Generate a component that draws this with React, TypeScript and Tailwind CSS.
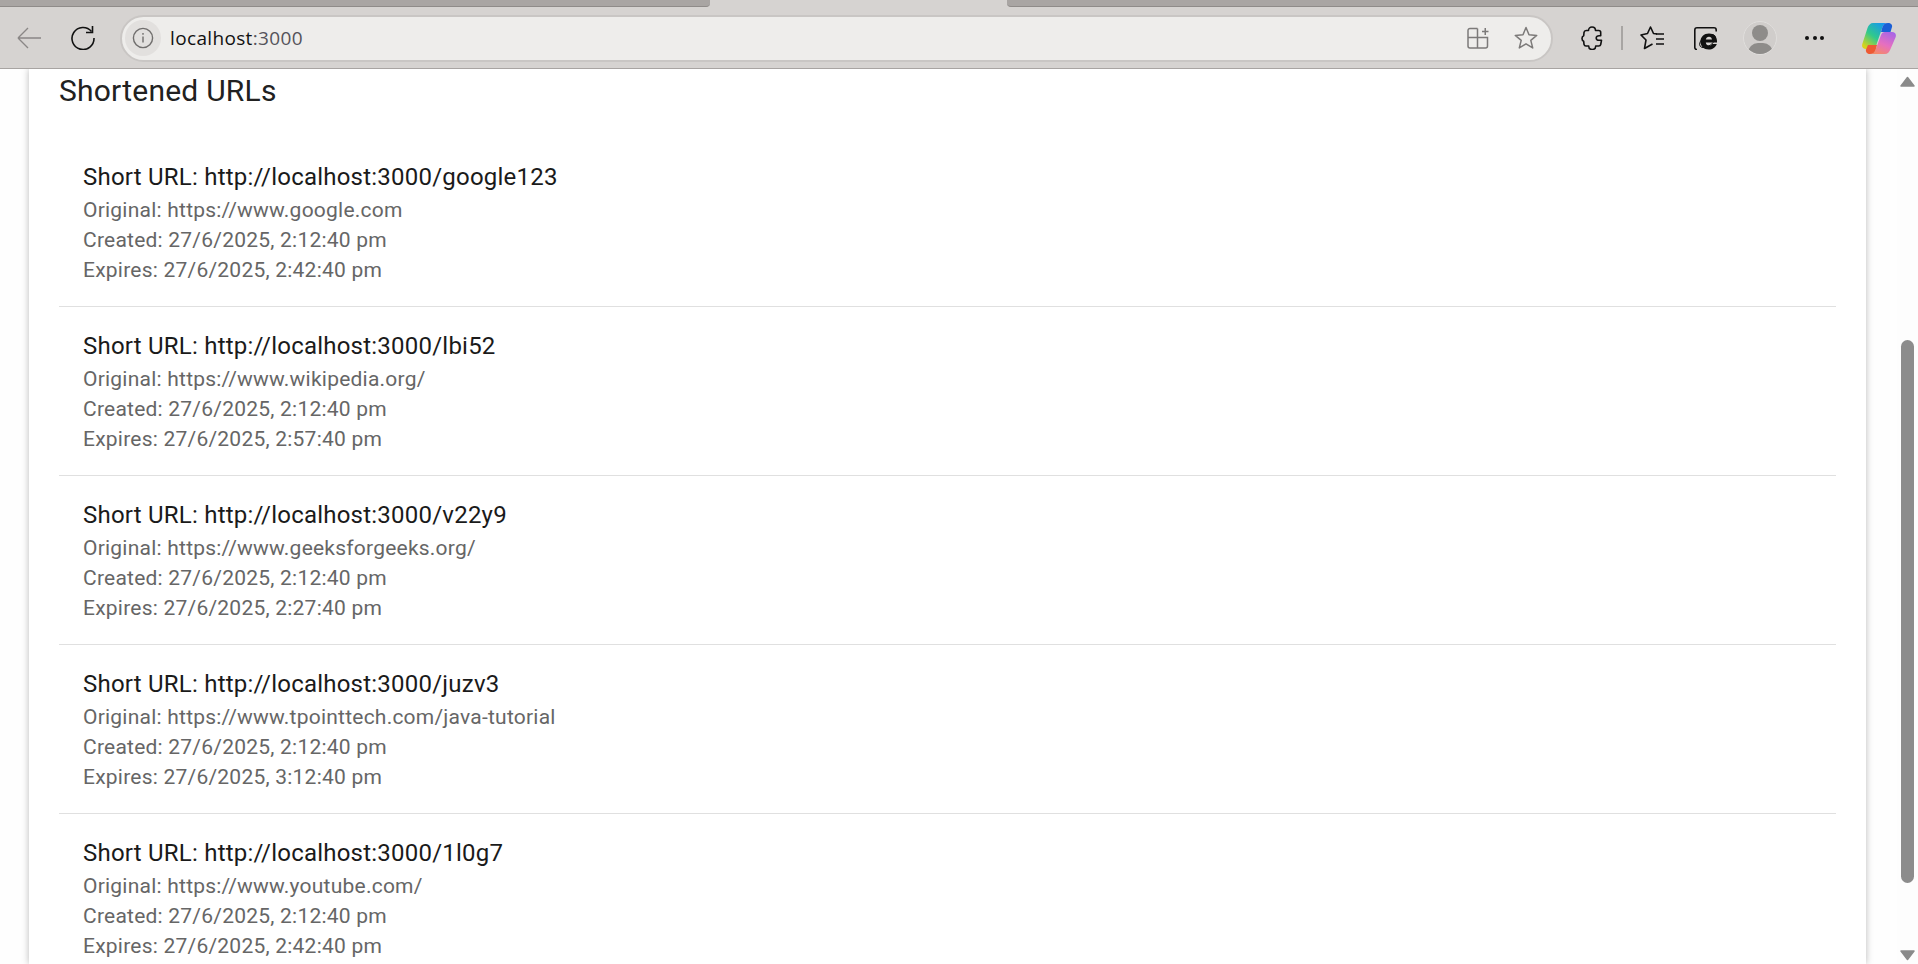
import React from "react";

const items = [
  ["google123", "https://www.google.com", "2:42:40 pm"],
  ["lbi52", "https://www.wikipedia.org/", "2:57:40 pm"],
  ["v22y9", "https://www.geeksforgeeks.org/", "2:27:40 pm"],
  ["juzv3", "https://www.tpointtech.com/java-tutorial", "3:12:40 pm"],
  ["1l0g7", "https://www.youtube.com/", "2:42:40 pm"],
];

function Toolbar() {
  return (
    <div className="h-[61px] shrink-0 bg-[#d6d3d1] border-b border-[#a8a4a2] flex items-center">
      <svg width="24" height="22" viewBox="0 0 24 22" className="ml-[17px] shrink-0" fill="none" stroke="#8a8786" strokeWidth="1.4">
        <path d="M1 11h23M1 11L11 1M1 11l10 10" />
      </svg>
      <svg width="24" height="24" viewBox="0 0 24 24" className="ml-[30px] shrink-0" fill="none" stroke="#111" strokeWidth="1.6">
        <path d="M20.500 5.500A11 11 0 1 0 23 12" />
        <path d="M21.500 0v6.500H15" />
      </svg>
      <div className="ml-[25px] w-[1433px] h-[47px] shrink-0 rounded-[24px] bg-[#eeedeb] border-2 border-[#c9c6c4] flex items-center">
        <div className="ml-[3px] w-9 h-9 shrink-0 rounded-full bg-[#e2e0de] flex items-center justify-center">
          <svg width="22" height="22" viewBox="0 0 22 22" fill="none" stroke="#706e6d" strokeWidth="1.4">
            <circle cx="11" cy="11" r="9.6" />
            <path d="M11 9.600v6M11 6v1.800" />
          </svg>
        </div>
        <span className="ml-[9px] text-[19px] tracking-[0.35px] text-[#111] font-['Open_Sans',sans-serif]">
          localhost<span className="text-[#55535a]">:3000</span>
        </span>
        <div className="ml-auto flex items-center">
          <svg width="22" height="22" viewBox="0 0 22 22" fill="none" stroke="#7c7a79" strokeWidth="1.5">
            <path d="M10.500 1.500H3a2 2 0 0 0-2 2v15.500a2 2 0 0 0 2 2h15.500a2 2 0 0 0 2-2v-8.500H1M10.500 1.500V21M15 4.500h6.500M18.250 1v7" />
          </svg>
          <svg width="24" height="24" viewBox="0 0 24 24" className="ml-[25px] mr-[13px]" fill="none" stroke="#7c7a79" strokeWidth="1.5" strokeLinejoin="round">
            <path d="M12 1.500l3 7.300 7.700.6-5.900 5 1.900 7.500L12 17.800l-6.700 4.100 1.900-7.500-5.900-5 7.700-.6z" />
          </svg>
        </div>
      </div>
      <svg width="22" height="24" viewBox="0 0 22 24" className="ml-[28px] shrink-0" fill="none" stroke="#111" strokeWidth="1.6" strokeLinejoin="round">
        <path d="M7.500 4.500C7.500 2.500 9 1 11 1s3.500 1.500 3.500 3.500h3.200c1.300 0 2 .8 2 2v3.200H18c-1.700 0-2.800 1-2.800 2.300s1.100 2.300 2.800 2.300h2.500l-.8 4.200c-.2 1-1 1.500-2 1.500h-3c0 2-1.500 3.500-3.500 3.500s-3.500-1.500-3.500-3.500H5c-1 0-1.800-.7-2-1.700l-.3-3c-1-.3-1.700-1.400-1.700-2.800s.7-2.500 1.700-2.800L3 6.500c.2-1.200 1-2 2.200-2z" />
      </svg>
      <div className="ml-[18px] w-[2px] h-[24px] shrink-0 bg-[#a8a5a3]" />
      <svg width="24" height="24" viewBox="0 0 24 24" className="ml-[17px] shrink-0" fill="none" stroke="#111" strokeWidth="1.6" strokeLinejoin="round">
        <path d="M17 8l-3.500-.5L10.500 1 7.500 7.500 1 9l5 5-1.500 8.500 8-4.500" />
        <path d="M16 8h8M16 13h8M16 18h8" />
      </svg>
      <svg width="23" height="23" viewBox="0 0 23 23" className="ml-[30px] shrink-0">
        <path d="M3 22.500H2.500A2 2 0 0 1 .8 20.500V3A2.200 2.200 0 0 1 3 .8h17A2.200 2.200 0 0 1 22.200 3v1.500" fill="none" stroke="#111" strokeWidth="1.6" />
        <ellipse cx="13.500" cy="14" rx="9" ry="5" transform="rotate(-35 13.500 14)" fill="none" stroke="#111" strokeWidth="0.9" />
        <path d="M6.500 14.500C6.500 10 10 6.500 15 6.500s8 3 8 7.500v1.500H11.800c.2 2 1.400 3 3.200 3 1.500 0 2.600-.6 3.300-1.600H22.800c-1.200 3.500-4.300 5.600-8 5.600-5 0-8.300-3-8.300-8zm5.300-2h6.200c-.2-1.700-1.300-2.800-3-2.800s-2.900 1.100-3.200 2.800z" fill="#111" />
      </svg>
      <div className="ml-[26px] w-[34px] h-[34px] shrink-0 rounded-full bg-[#d0cdcb] border border-[#e0dedc] overflow-hidden flex flex-col items-center">
        <div className="w-[16px] h-[16px] rounded-full bg-[#8e8c8a] mt-[3px] shrink-0" />
        <div className="w-[25px] h-[20px] rounded-full bg-[#8e8c8a] mt-[2px] shrink-0" />
      </div>
      <div className="ml-[28px] shrink-0 flex gap-[3.5px]">
        <div className="w-1 h-1 rounded-full bg-[#111]" />
        <div className="w-1 h-1 rounded-full bg-[#111]" />
        <div className="w-1 h-1 rounded-full bg-[#111]" />
      </div>
      <svg width="34" height="31" viewBox="0 0 34 31" className="ml-[38px] shrink-0">
        <defs>
          <linearGradient id="cpa" x1="0.1" y1="0.9" x2="0.8" y2="0">
            <stop offset="0" stopColor="#d8d41a" />
            <stop offset="0.45" stopColor="#30c98c" />
            <stop offset="1" stopColor="#1596f2" />
          </linearGradient>
          <linearGradient id="cpb" x1="0.8" y1="0" x2="0.3" y2="1">
            <stop offset="0" stopColor="#a865e6" />
            <stop offset="0.55" stopColor="#e66fc0" />
            <stop offset="1" stopColor="#f58a6a" />
          </linearGradient>
        </defs>
        <path d="M11 0h15c-3 0-4.500 1.500-5.500 4L15 20c-.7 3.500-3 6-6 6H4c-3 0-4.500-2-3.700-5L5.500 5C6.500 2 8.500 0 11 0z" fill="url(#cpa)" />
        <path d="M26 0c-3 0-4.500 1.500-5.500 4l-1.500 5h9.500L30 4c.5-2-1-4-4-4z" fill="#1a5fd6" />
        <path d="M23 31H8c3 0 4.500-1.500 5.500-4L19 12c.7-2 2-3 4-3h7c3 0 4.500 2 3.700 5L28.500 26c-1 3-3 5-5.500 5z" fill="url(#cpb)" />
        <path d="M8 31c3 0 4.500-1.500 5.500-4l1.500-5H6l-2 4.500C3.500 29 5 31 8 31z" fill="#ee5a34" />
      </svg>
    </div>
  );
}

export default function App() {
  return (
    <div className="h-[964px] w-[1918px] overflow-hidden bg-white flex flex-col font-['Roboto',sans-serif]">
      <div className="h-[8px] shrink-0 bg-[#d6d3d1] flex">
        <div className="w-[710px] h-[7px] bg-[#a9a5a3] rounded-br-[4px] border-b border-[#8f8b89]" />
        <div className="ml-[297px] flex-1 h-[7px] bg-[#a9a5a3] rounded-bl-[4px] border-b border-[#8f8b89]" />
      </div>
      <Toolbar />
      <div className="flex-1 flex min-h-0 overflow-hidden bg-[#fefefe]">
        <div className="w-[1837px] ml-[29px] shrink-0 bg-white shadow-[0_0_7px_rgba(0,0,0,0.28)] px-[30px]">
          <h2 className="text-[30px] leading-[44px] tracking-[0.225px] text-[#212121]">Shortened URLs</h2>
          <ul className="mt-[25px]">
            {items.map(([code, orig, exp], i) => (
              <li key={code} className={`px-[24px] py-[21px] ${i < items.length - 1 ? "border-b border-[#e0e0e0]" : ""}`}>
                <div className="text-[24px] leading-[36px] tracking-[0.225px] text-[#1a1a1a]">Short URL: http://localhost:3000/{code}</div>
                <div className="text-[21px] leading-[30px] tracking-[0.225px] text-[#666]">Original: {orig}</div>
                <div className="text-[21px] leading-[30px] tracking-[0.225px] text-[#666]">Created: 27/6/2025, 2:12:40 pm</div>
                <div className="text-[21px] leading-[30px] tracking-[0.225px] text-[#666]">Expires: 27/6/2025, {exp}</div>
              </li>
            ))}
          </ul>
        </div>
        <div className="ml-auto w-[21px] shrink-0 bg-[#fdfdfd] flex flex-col items-center">
          <svg width="15" height="11" viewBox="0 0 15 11" className="mt-[7px] shrink-0">
            <path d="M7.500 1.500L14 10H1z" fill="#8a8a8a" stroke="#8a8a8a" strokeWidth="1.500" strokeLinejoin="round" />
          </svg>
          <div className="mt-[253px] w-[13px] h-[543px] shrink-0 rounded-full bg-[#8c8c8c]" />
          <svg width="15" height="11" viewBox="0 0 15 11" className="mt-auto mb-[3px] shrink-0">
            <path d="M7.500 9.500L14 1H1z" fill="#8a8a8a" stroke="#8a8a8a" strokeWidth="1.500" strokeLinejoin="round" />
          </svg>
        </div>
      </div>
    </div>
  );
}
